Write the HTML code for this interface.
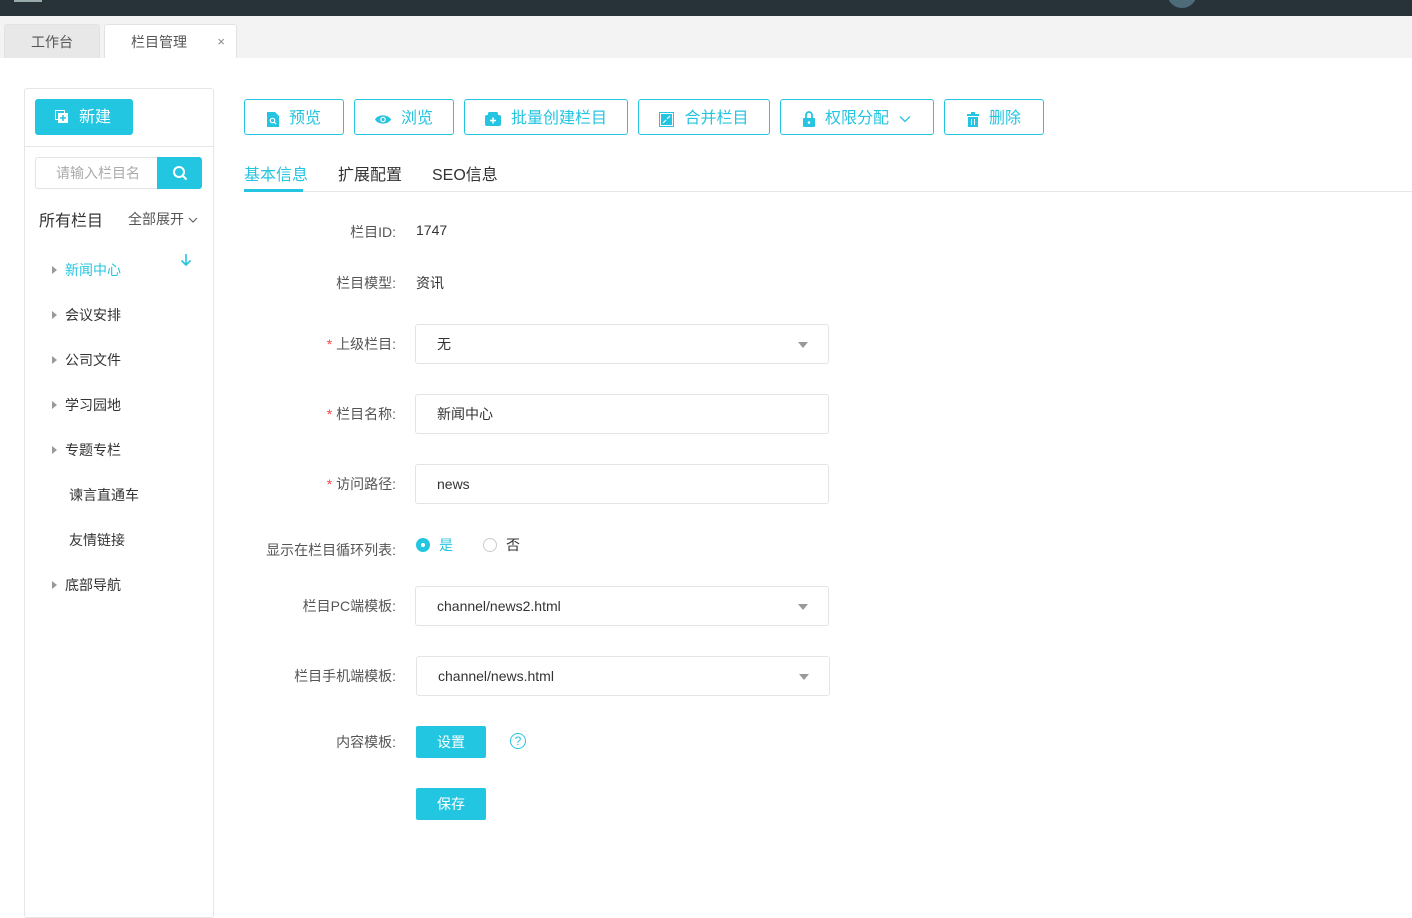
<!DOCTYPE html>
<html><head><meta charset="utf-8"><style>
*{margin:0;padding:0;box-sizing:border-box}
body{width:1412px;height:910px;overflow:hidden;background:#fff;font-family:"Liberation Sans","Noto Sans CJK SC",sans-serif;color:#333;position:relative;font-size:14px}
.a{position:absolute}
.top{left:0;top:0;width:1412px;height:16px;background:#283239}
.tabs{left:0;top:16px;width:1412px;height:42px;background:#f3f3f3}
.tab{top:8px;height:34px;border:1px solid #e2e2e2;border-bottom:none;border-radius:3px 3px 0 0;font-size:14px;color:#555;line-height:34px}
.btn{top:99px;height:36px;border:1px solid #25c4e0;border-radius:3px;color:#25c4e0;font-size:16px;line-height:34px;display:flex;align-items:center;justify-content:center;gap:10px;padding-top:4px}
.lbl{right:1016px;font-size:14px;color:#555;text-align:right;white-space:nowrap}
.inp{left:415px;width:414px;height:40px;border:1px solid #e4e4e4;border-radius:3px;padding-left:21px;line-height:38px;font-size:14px;color:#333}
.car{position:absolute;right:20px;top:17px;border-left:5px solid transparent;border-right:5px solid transparent;border-top:6px solid #999}
.tree{left:52px;font-size:14px;color:#333;}
.tri{display:inline-block;border-top:4px solid transparent;border-bottom:4px solid transparent;border-left:5px solid #999;margin-right:8px;vertical-align:1px}
.req{color:#f44}
.cbtn{left:416px;width:70px;height:32px;background:#22c6e0;border-radius:2px;color:#fff;text-align:center;line-height:32px;font-size:14px}
</style></head><body>
<div class="a top"></div>
<div class="a" style="left:14px;top:0;width:28px;height:2px;background:#9aa"></div>
<div class="a" style="left:1167px;top:-22px;width:30px;height:30px;border-radius:50%;background:#4e6b7a"></div>
<div class="a tabs"></div>
<div class="a tab" style="left:4px;width:96px;background:#e8e8e8;text-align:center;top:24px">工作台</div>
<div class="a tab" style="left:104px;width:133px;background:#fff;top:24px;padding-left:26px">栏目管理<span style="position:absolute;right:11px;color:#888;font-size:13px">×</span></div>

<div class="a" style="left:24px;top:88px;width:190px;height:830px;border:1px solid #e6e6e6;border-radius:3px"></div>
<div class="a" style="left:25px;top:146px;width:188px;height:1px;background:#e6e6e6"></div>
<div class="a" style="left:35px;top:99px;width:98px;height:36px;background:#22c6e0;border-radius:3px;color:#fff;font-size:16px;line-height:36px;padding-left:20px;padding-top:1px">
<svg width="14" height="14" style="vertical-align:-2px;margin-right:10px" viewBox="0 0 14 14"><rect x="0.5" y="0.5" width="9" height="9" fill="none" stroke="#fff"/><rect x="3" y="3" width="10" height="10" fill="#fff"/><path d="M8 5v6M5 8h6" stroke="#22c6e0" stroke-width="1.5"/></svg>新建</div>
<div class="a" style="left:35px;top:157px;width:123px;height:32px;border:1px solid #e4e4e4;border-right:none;border-radius:3px 0 0 3px;font-size:14px;color:#aaa;line-height:30px;padding-left:20px">请输入栏目名</div>
<div class="a" style="left:157px;top:157px;width:45px;height:32px;background:#22c6e0;border-radius:0 3px 3px 0"><svg width="16" height="16" style="margin:8px 0 0 15px" viewBox="0 0 16 16"><circle cx="7" cy="7" r="5" fill="none" stroke="#fff" stroke-width="2"/><path d="M11 11l3.5 3.5" stroke="#fff" stroke-width="2"/></svg></div>
<div class="a" style="left:39px;top:207px;font-size:16px;color:#333">所有栏目</div>
<div class="a" style="left:128px;top:209px;font-size:14px;color:#555">全部展开 <svg width="10" height="7" viewBox="0 0 10 7"><path d="M1 1l4 4 4-4" fill="none" stroke="#666" stroke-width="1.2"/></svg></div>
<div class="a tree" style="top:260px;color:#25c4e0"><span class="tri"></span>新闻中心</div>
<div class="a" style="left:180px;top:253px;color:#25c4e0"><svg width="12" height="14" viewBox="0 0 12 14"><path d="M6 1v11M1.5 7.5L6 12l4.5-4.5" fill="none" stroke="#25c4e0" stroke-width="1.6"/></svg></div>
<div class="a tree" style="top:305px"><span class="tri"></span>会议安排</div>
<div class="a tree" style="top:350px"><span class="tri"></span>公司文件</div>
<div class="a tree" style="top:395px"><span class="tri"></span>学习园地</div>
<div class="a tree" style="top:440px"><span class="tri"></span>专题专栏</div>
<div class="a tree" style="top:485px;left:69px">谏言直通车</div>
<div class="a tree" style="top:530px;left:69px">友情链接</div>
<div class="a tree" style="top:575px"><span class="tri"></span>底部导航</div>

<div class="a btn" style="left:244px;width:100px"><svg width="12" height="15" viewBox="0 0 12 15"><path d="M0 0h8l4 4v11H0z" fill="#25c4e0"/><circle cx="5.5" cy="8.5" r="2.2" fill="none" stroke="#fff" stroke-width="1.2"/><path d="M7 10l2 2" stroke="#fff" stroke-width="1.2"/></svg>预览</div>
<div class="a btn" style="left:354px;width:100px"><svg width="16" height="11" viewBox="0 0 16 11"><path d="M0 5.5C3 0 13 0 16 5.5 13 11 3 11 0 5.5z" fill="#25c4e0"/><circle cx="8" cy="5.5" r="2.8" fill="#fff"/><circle cx="8" cy="5.5" r="1.6" fill="#25c4e0"/></svg>浏览</div>
<div class="a btn" style="left:464px;width:164px"><svg width="16" height="14" viewBox="0 0 16 14"><rect x="3" y="0" width="10" height="4" rx="1.5" fill="#25c4e0"/><rect x="0" y="3" width="16" height="11" rx="2" fill="#25c4e0"/><path d="M8 5.5v6M5 8.5h6" stroke="#fff" stroke-width="1.5"/></svg>批量创建栏目</div>
<div class="a btn" style="left:638px;width:132px"><svg width="15" height="15" viewBox="0 0 15 15"><rect x="0.5" y="0.5" width="14" height="14" fill="none" stroke="#25c4e0"/><rect x="2" y="2" width="11" height="11" fill="#25c4e0"/><path d="M4 11l3-3M11 4L8 7" stroke="#fff" stroke-width="1.2"/></svg>合并栏目</div>
<div class="a btn" style="left:780px;width:154px"><svg width="12" height="16" viewBox="0 0 12 16"><path d="M3 7V4a3 3 0 016 0v3" fill="none" stroke="#25c4e0" stroke-width="1.8"/><rect x="0" y="7" width="12" height="9" rx="1" fill="#25c4e0"/><circle cx="6" cy="11.5" r="1.3" fill="#fff"/></svg>权限分配<svg width="12" height="8" viewBox="0 0 12 8"><path d="M1 1.5l5 5 5-5" fill="none" stroke="#25c4e0" stroke-width="1.3"/></svg></div>
<div class="a btn" style="left:944px;width:100px"><svg width="12" height="15" viewBox="0 0 12 15"><rect x="4" y="0" width="4" height="2" fill="#25c4e0"/><rect x="0" y="2" width="12" height="2" fill="#25c4e0"/><rect x="1" y="5" width="10" height="10" fill="#25c4e0"/><path d="M4.5 7v6M7.5 7v6" stroke="#fff"/></svg>删除</div>

<div class="a" style="left:244px;top:161px;font-size:16px;color:#25c4e0">基本信息</div>
<div class="a" style="left:338px;top:161px;font-size:16px;color:#333">扩展配置</div>
<div class="a" style="left:432px;top:161px;font-size:16px;color:#333">SEO信息</div>
<div class="a" style="left:244px;top:191px;width:1168px;height:1px;background:#e6e6e6"></div>
<div class="a" style="left:244px;top:189px;width:59px;height:3px;background:#25c4e0"></div>

<div class="a lbl" style="top:222px">栏目ID:</div><div class="a" style="left:416px;top:222px">1747</div>
<div class="a lbl" style="top:273px">栏目模型:</div><div class="a" style="left:416px;top:273px">资讯</div>
<div class="a lbl" style="top:334px"><span class="req">* </span>上级栏目:</div>
<div class="a inp" style="top:324px">无<i class="car"></i></div>
<div class="a lbl" style="top:404px"><span class="req">* </span>栏目名称:</div>
<div class="a inp" style="top:394px">新闻中心</div>
<div class="a lbl" style="top:474px"><span class="req">* </span>访问路径:</div>
<div class="a inp" style="top:464px">news</div>
<div class="a lbl" style="top:540px">显示在栏目循环列表:</div>
<div class="a" style="left:416px;top:538px;width:14px;height:14px;border-radius:50%;background:#22c6e0"><div style="width:4px;height:4px;background:#fff;border-radius:50%;margin:5px"></div></div>
<div class="a" style="left:439px;top:535px;color:#25c4e0">是</div>
<div class="a" style="left:483px;top:538px;width:14px;height:14px;border-radius:50%;border:1px solid #ccc"></div>
<div class="a" style="left:506px;top:535px">否</div>
<div class="a lbl" style="top:596px">栏目PC端模板:</div>
<div class="a inp" style="top:586px">channel/news2.html<i class="car"></i></div>
<div class="a lbl" style="top:666px">栏目手机端模板:</div>
<div class="a inp" style="top:656px;left:416px">channel/news.html<i class="car"></i></div>
<div class="a lbl" style="top:732px">内容模板:</div>
<div class="a cbtn" style="top:726px">设置</div>
<div class="a" style="left:510px;top:733px;width:16px;height:16px;border-radius:50%;border:1px solid #25c4e0;color:#25c4e0;font-size:12px;text-align:center;line-height:14px">?</div>
<div class="a cbtn" style="top:788px">保存</div>
</body></html>
